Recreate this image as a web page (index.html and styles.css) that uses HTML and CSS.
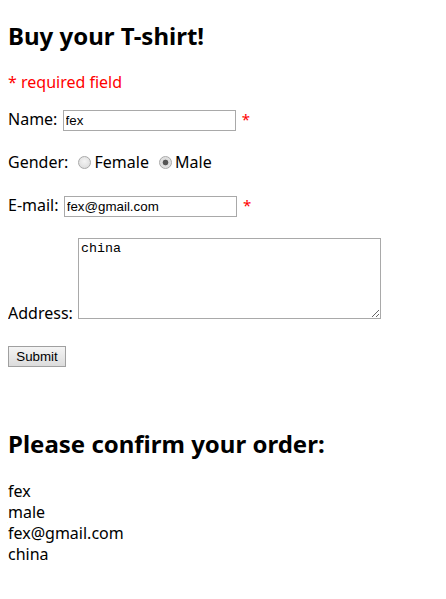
FILE: index.html
```html
<!DOCTYPE html>
<html>
<head>
<meta charset="utf-8">
<link rel="stylesheet" href="styles.css">
</head>
<body>
<h2 class="title first">Buy your T-shirt!</h2>
<p class="note"><span class="error">* required field</span></p>
<form class="order-form">
  <div class="row">Name: <input class="field" type="text" value="fex"> <span class="error star">*</span></div>
  <div class="row">Gender: <input class="radio" type="radio" name="g">Female <input class="radio" type="radio" name="g" checked>Male</div>
  <div class="row">E-mail: <input class="field" type="text" value="fex@gmail.com"> <span class="error star">*</span></div>
  <div class="row row-area">Address: <textarea class="area">china</textarea></div>
  <div class="row"><input class="submit" type="submit" value="Submit"></div>
</form>
<h2 class="title confirm">Please confirm your order:</h2>
<div class="result">fex<br>male<br>fex@gmail.com<br>china</div>
</body>
</html>
```
FILE: styles.css
```css
body {
  margin: 8px;
  font-family: "Noto Sans", "Open Sans", sans-serif;
  font-size: 16px;
  line-height: 1.32;
  color: #000;
  background: #fff;
}
.title {
  font-size: 24px;
  font-weight: bold;
  margin: 19.92px 0;
}
.title.first { margin-top: 12px; }
.note { margin: 16px 0; }
.error { color: #f00; }
.star { margin-left: 2px; font-size: 15px; }
.order-form { margin: 0; }
.row { margin-bottom: 21.5px; }
.row-area { margin-bottom: 21px; }
.row:last-child { margin-bottom: 0; }
.field {
  box-sizing: border-box;
  width: 173px;
  height: 21px;
  border: 1px solid #a9a9a9;
  padding: 1px 2px;
  font-family: "Liberation Sans", Arial, sans-serif;
  font-size: 13.33px;
  margin: 0 0 0 1px;
  vertical-align: baseline;
}
.radio {
  appearance: none;
  -webkit-appearance: none;
  width: 13px;
  height: 13px;
  margin: 3px 3px 0 6px;
  border-radius: 50%;
  border: 1px solid #a9a9a9;
  background: radial-gradient(circle at 50% 40%, #f4f4f4, #d8d8d8);
  box-sizing: border-box;
  vertical-align: -1px;
}
.radio:checked {
  background: radial-gradient(circle, #555 0 2.5px, #dcdcdc 3.2px, #e8e8e8 100%);
}
.area {
  box-sizing: border-box;
  width: 303px;
  height: 81px;
  border: 1px solid #a9a9a9;
  padding: 2px;
  font-family: "Liberation Mono", "Courier New", monospace;
  font-size: 13.33px;
  margin: 0 0 0 1px;
  vertical-align: baseline;
  resize: both;
}
.submit {
  box-sizing: border-box;
  width: 58px;
  height: 21px;
  margin: 0;
  padding: 0 6px;
  font-family: "Liberation Sans", Arial, sans-serif;
  font-size: 13.33px;
  border: 1px solid #a0a0a0;
  border-radius: 0;
  background: linear-gradient(#f4f4f4, #dcdcdc);
  color: #000;
}
.confirm { margin: 61px 0 21px; }
.result { margin: 0; line-height: 21px; }
```
